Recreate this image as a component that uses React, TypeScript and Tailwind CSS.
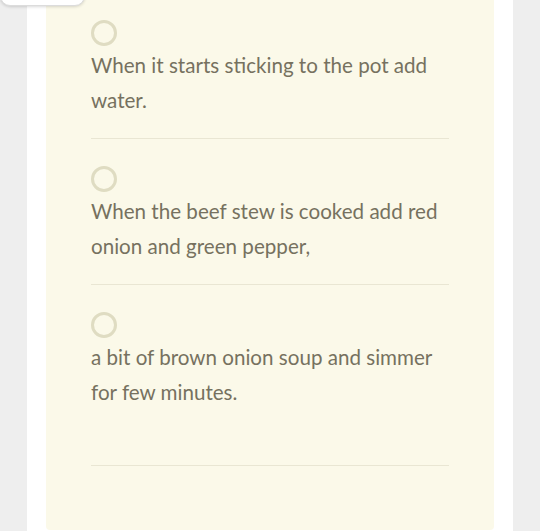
import React from 'react'

const steps = [
  "When it starts sticking to the pot add water.",
  "When the beef stew is cooked add red onion and green pepper,",
  "a bit of brown onion soup and simmer for few minutes.",
]

function StepItem({ text, first, last }: { text: string; first?: boolean; last?: boolean }) {
  return (
    <div className={`${first ? 'pt-[20px]' : 'pt-[27px]'} ${last ? 'pb-[55px]' : 'pb-[20px]'} border-b border-[#e9e6d3]`}>
      <div className="w-[26px] h-[26px] rounded-full border-[3px] border-[#dfdcc2]" />
      <p className="mt-[2px] text-[20.6px] leading-[35px] font-normal text-[#76715f]">{text}</p>
    </div>
  )
}

export default function App() {
  return (
    <div className="relative h-[531px] overflow-hidden bg-[#eeeeee] font-['Lato','Liberation_Sans',sans-serif]">
      <div className="ml-[27px] w-[486px] h-full bg-white">
        <div className="mx-[19px] h-[530px] bg-[#fbf9e9] rounded-b-[4px] px-[45px]">
          {steps.map((s, i) => (
            <StepItem key={i} text={s} first={i === 0} last={i === steps.length - 1} />
          ))}
        </div>
      </div>
      {/* sticky button peeking in at the top */}
      <div className="absolute left-0 top-[-30px] w-[85px] h-[36px] bg-white rounded-b-[10px] border border-[#dcdcdc] shadow-[0_1px_3px_rgba(0,0,0,0.15)]" />
    </div>
  )
}
